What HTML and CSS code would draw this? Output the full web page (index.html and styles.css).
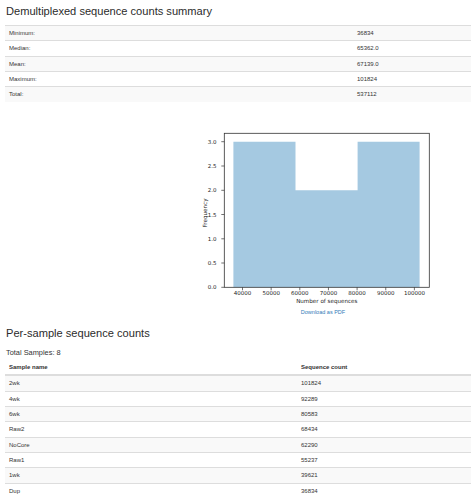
FILE: index.html
```html
<!DOCTYPE html>
<html lang="en">
<head>
<meta charset="utf-8">
<title>Demultiplexed sequence counts summary</title>
<link rel="stylesheet" href="styles.css">
</head>
<body>
<div class="page">
  <h1 class="title">Demultiplexed sequence counts summary</h1>
  <table class="table striped summary">
    <tbody>
      <tr><td class="label-col">Minimum:</td><td>36834</td></tr>
      <tr><td class="label-col">Median:</td><td>65362.0</td></tr>
      <tr><td class="label-col">Mean:</td><td>67139.0</td></tr>
      <tr><td class="label-col">Maximum:</td><td>101824</td></tr>
      <tr><td class="label-col">Total:</td><td>537112</td></tr>
    </tbody>
  </table>

  <div class="chart">
    <svg class="hist" width="250" height="180" viewBox="0 0 250 180" xmlns="http://www.w3.org/2000/svg">
      <path fill="#a5c9e1" d="M35.4 161.3 V15.7 H97.5 V64.3 H159.6 V15.7 H221.6 V161.3 Z"/>
      <rect x="26.3" y="7.3" width="205" height="154" fill="none" stroke="#333" stroke-width="0.8"/>
      <g stroke="#333" stroke-width="0.7">
        <line x1="23.3" y1="15.7" x2="26.3" y2="15.7"/>
        <line x1="23.3" y1="40" x2="26.3" y2="40"/>
        <line x1="23.3" y1="64.3" x2="26.3" y2="64.3"/>
        <line x1="23.3" y1="88.5" x2="26.3" y2="88.5"/>
        <line x1="23.3" y1="112.8" x2="26.3" y2="112.8"/>
        <line x1="23.3" y1="137" x2="26.3" y2="137"/>
        <line x1="23.3" y1="161.3" x2="26.3" y2="161.3"/>
        <line x1="44.5" y1="161.3" x2="44.5" y2="164.3"/>
        <line x1="73.15" y1="161.3" x2="73.15" y2="164.3"/>
        <line x1="101.8" y1="161.3" x2="101.8" y2="164.3"/>
        <line x1="130.45" y1="161.3" x2="130.45" y2="164.3"/>
        <line x1="159.1" y1="161.3" x2="159.1" y2="164.3"/>
        <line x1="187.75" y1="161.3" x2="187.75" y2="164.3"/>
        <line x1="216.4" y1="161.3" x2="216.4" y2="164.3"/>
      </g>
      <g class="tick" text-anchor="end">
        <text x="18.5" y="17.7">3.0</text>
        <text x="18.5" y="42">2.5</text>
        <text x="18.5" y="66.3">2.0</text>
        <text x="18.5" y="90.5">1.5</text>
        <text x="18.5" y="114.8">1.0</text>
        <text x="18.5" y="139">0.5</text>
        <text x="18.5" y="163.3">0.0</text>
      </g>
      <g class="tick" text-anchor="middle">
        <text x="44.5" y="169.3">40000</text>
        <text x="73.15" y="169.3">50000</text>
        <text x="101.8" y="169.3">60000</text>
        <text x="130.45" y="169.3">70000</text>
        <text x="159.1" y="169.3">80000</text>
        <text x="187.75" y="169.3">90000</text>
        <text x="216.4" y="169.3">100000</text>
      </g>
      <text class="axis-label" x="128.8" y="176.8" text-anchor="middle">Number of sequences</text>
      <text class="axis-label" x="9" y="87" text-anchor="middle" transform="rotate(-90 9 87)">Frequency</text>
    </svg>
    <a class="download" href="#">Download as PDF</a>
  </div>

  <h2 class="title second">Per-sample sequence counts</h2>
  <p class="total">Total Samples: 8</p>
  <table class="table striped samples">
    <thead>
      <tr><th class="name-col">Sample name</th><th>Sequence count</th></tr>
    </thead>
    <tbody>
      <tr><td>2wk</td><td>101824</td></tr>
      <tr><td>4wk</td><td>92289</td></tr>
      <tr><td>6wk</td><td>80583</td></tr>
      <tr><td>Raw2</td><td>68434</td></tr>
      <tr><td>NoCore</td><td>62290</td></tr>
      <tr><td>Raw1</td><td>55237</td></tr>
      <tr><td>1wk</td><td>39621</td></tr>
      <tr><td>Dup</td><td>36834</td></tr>
    </tbody>
  </table>
</div>
</body>
</html>
```

FILE: styles.css
```css
html, body {
  margin: 0;
  padding: 0;
  background: #fff;
}

body {
  font-family: "Liberation Sans", Arial, Helvetica, sans-serif;
  color: #333;
  font-size: 6px;
}

.page {
  padding: 0 0 0 5px;
}

.title {
  font-size: 11.1px;
  line-height: 12px;
  font-weight: normal;
  margin: 5px 0 0 1px;
  color: #2b2b2b;
}

.title.second {
  margin-top: 11px;
}

.table {
  width: 100%;
  border-collapse: collapse;
  border-spacing: 0;
}

.table td,
.table th {
  text-align: left;
  padding: 3px 4px;
  line-height: 8.33px;
  font-size: 6px;
  border-top: 1px solid #ddd;
  vertical-align: middle;
}

.table th {
  font-weight: bold;
  border-top: 0;
  border-bottom: 2px solid #ddd;
  padding-top: 4px;
}

.striped tbody tr:nth-child(odd) td {
  background: #f9f9f9;
}

.summary {
  margin-top: 8px;
}

.summary .label-col {
  width: 340px;
}

.samples .name-col {
  width: 284px;
}

.chart {
  margin-top: 24px;
  padding-left: 193px;
  width: 250px;
  display: flex;
  flex-direction: column;
  align-items: center;
}

.hist {
  display: block;
}

.hist .tick text {
  font-family: "DejaVu Sans", sans-serif;
  font-size: 5.5px;
  fill: #222;
}

.hist .axis-label {
  font-family: "DejaVu Sans", sans-serif;
  font-size: 5.6px;
  fill: #222;
}

.download {
  display: block;
  margin-top: 2.5px;
  font-size: 5.5px;
  line-height: 8px;
  color: #337ab7;
  text-decoration: none;
}

.total {
  font-size: 7.4px;
  line-height: 8px;
  margin: 9.5px 0 0 1px;
  color: #333;
}

.samples {
  margin-top: 2.5px;
}
```
